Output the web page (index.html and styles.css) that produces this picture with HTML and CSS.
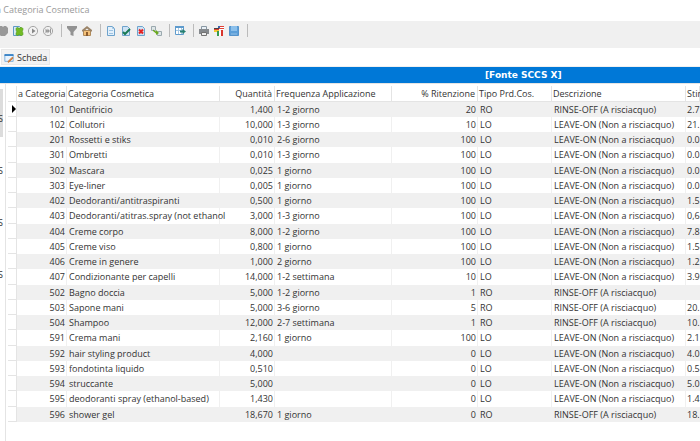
FILE: index.html
```
<!DOCTYPE html>
<html lang="it">
  <head>
    <meta charset="UTF-8" />
    <meta name="viewport" content="width=device-width, initial-scale=1.0" />
    <title>Categoria Cosmetica</title>
    <link rel="stylesheet" href="styles.css">
  </head>
  <body>
    <header class="title-bar">a Categoria Cosmetica</header>

    <div class="toolbar" role="toolbar">
      <button type="button" class="tool tool-cut" aria-label="Stop">
        <svg viewBox="0 0 12 12"><path d="M2 1h3l1 1 1-1h2l2 2v5l-3 3H4L1 9V3z" fill="#999" /></svg>
      </button>
      <button type="button" class="tool" aria-label="Aggiorna">
        <svg viewBox="0 0 12 12">
          <path d="M1.5 1.5h6l2 2v7h-8z" fill="#d7e8f6" stroke="#5e9ac4" />
          <path d="M4 4c0-2 3-2 3 0 0-2 4-2 4 0s-1 2-1 2 1 1 1 3-3 2-4 0c0 2-3 2-3 0s1-2 1-2-1-1-1-3z" fill="#73bb25" stroke="#4f9a17" stroke-width=".6" />
        </svg>
      </button>
      <button type="button" class="tool" aria-label="Successivo">
        <svg viewBox="0 0 12 12">
          <circle cx="6" cy="6" r="4.6" fill="#f2f2f2" stroke="#a6a6a6" />
          <path d="M5 3.5l3.5 2.5L5 8.5z" fill="#888" />
        </svg>
      </button>
      <button type="button" class="tool" aria-label="Ultimo">
        <svg viewBox="0 0 12 12">
          <circle cx="6" cy="6" r="4.6" fill="#f2f2f2" stroke="#a6a6a6" />
          <path d="M3.5 3.5L6 6 3.5 8.5zM5.5 3.5L8 6 5.5 8.5zM8 3.5h1v5H8z" fill="#999" />
        </svg>
      </button>
      <span class="separator"></span>
      <button type="button" class="tool" aria-label="Filtro">
        <svg viewBox="0 0 12 12"><path d="M1 1h10v2L7.5 7v4L4.500 10V7L1 3z" fill="#929292" /></svg>
      </button>
      <button type="button" class="tool" aria-label="Home">
        <svg viewBox="0 0 12 12">
          <path d="M2.500 5.500h7v5h-7z" fill="#f3c078" stroke="#b08a5a" />
          <path d="M1 6.500V5l5-4 5 4v1.500H9.500L6 3.500 2.500 6.500z" fill="#9b8468" />
          <path d="M5 7h2v4H5z" fill="#8d5b2b" />
        </svg>
      </button>
      <span class="separator"></span>
      <button type="button" class="tool" aria-label="Nuovo">
        <svg viewBox="0 0 12 12">
          <path d="M2.500 1.500h5l2 2v7h-7z" fill="#e3f0fb" stroke="#6ea3cc" />
          <path d="M7.500 1.500v2h2M4 5.500h4M4 8.500h4" fill="none" stroke="#9fc4e2" />
        </svg>
      </button>
      <button type="button" class="tool" aria-label="Conferma">
        <svg viewBox="0 0 12 12">
          <path d="M2.500 1.500h5l2 2v7h-7z" fill="#cfe3f5" stroke="#6ea3cc" />
          <path d="M3 7l2 2 5-5" fill="none" stroke="#197a53" stroke-width="2" />
        </svg>
      </button>
      <button type="button" class="tool" aria-label="Elimina">
        <svg viewBox="0 0 12 12">
          <path d="M2.500 1.500h5l2 2v7h-7z" fill="#cfe3f5" stroke="#6ea3cc" />
          <path d="M4 4.500l4 4M8 4.500l-4 4" stroke="#e52222" stroke-width="2" />
        </svg>
      </button>
      <button type="button" class="tool" aria-label="Duplica">
        <svg viewBox="0 0 12 12">
          <path d="M1.500 1.500h4v4h-4zM7.500 6.500h4v4h-4z" fill="#dfe6e9" stroke="#9aa9ae" />
          <path d="M3 4.500l3 2V5l3 3-3 2V8.500L3 6z" fill="#69a91e" />
        </svg>
      </button>
      <span class="separator"></span>
      <button type="button" class="tool" aria-label="Esporta">
        <svg viewBox="0 0 12 12">
          <path d="M1.500 1.500h8v8h-8z" fill="#fff" stroke="#5e9bcd" />
          <path d="M1 1h9v2H1z" fill="#5e9bcd" />
          <path d="M4.500 3v6M7.500 3v6M2 5.500h7" stroke="#a8c9e4" />
          <path d="M6 5.500h2.500V4L12 6.500 8.500 9V7.500H6z" fill="#278072" />
        </svg>
      </button>
      <span class="separator"></span>
      <button type="button" class="tool" aria-label="Stampa">
        <svg viewBox="0 0 12 12">
          <path d="M3.500 1.500h5v3h-5z" fill="#e9f0f6" stroke="#8897a3" />
          <path d="M1 4h10v5H1z" fill="#85898d" />
          <path d="M3.500 7.500h5v3h-5z" fill="#eee" stroke="#737373" />
        </svg>
      </button>
      <button type="button" class="tool" aria-label="Lingua">
        <svg viewBox="0 0 12 12">
          <path d="M5 1h6v1H5zM5 3h6v1H5z" fill="#e04136" />
          <path d="M5 2h6v1H5zM5 4h6v1H5z" fill="#fff" />
          <path d="M5 1h2v2H5z" fill="#3f62a8" />
          <path d="M1 3h5v1H1z" fill="#444" />
          <path d="M1 4h5v1H1z" fill="#df3c2a" />
          <path d="M1 5h5v2H1z" fill="#f5c731" />
          <path d="M4 6h2v5H4z" fill="#359a50" />
          <path d="M6 6h2v5H6z" fill="#fff" />
          <path d="M8 5h2v6H8z" fill="#d8352c" />
        </svg>
      </button>
      <button type="button" class="tool" aria-label="Salva">
        <svg viewBox="0 0 12 12">
          <path d="M1.500 1.500h9v9h-9z" fill="#5c9fd9" stroke="#5593cb" />
          <path d="M3 1h6v5H3z" fill="#8cc0eb" />
          <path d="M3 8h6v2H3z" fill="#77afdf" />
        </svg>
      </button>
      <span class="separator"></span>
    </div>

    <nav class="tabs">
      <button type="button" class="tab">
        <svg class="tab-icon" viewBox="0 0 12 12">
          <path d="M1 2h10v8H1z" fill="#e8f4ff" stroke="#6ca6d8" />
          <path d="M1 2h10v1H1z" fill="#347fc4" stroke="#347fc4" />
          <path d="M5 10l5-5 1 1-5 5H5z" fill="#e8873a" stroke="#c0702f" />
        </svg>
        Scheda
      </button>
    </nav>

    <div class="source">[Fonte SCCS X]</div>

    <main class="content">
      <aside class="side">
        <button type="button" class="side-item active">S</button>
        <button type="button" class="side-item">S</button>
        <button type="button" class="side-item">S</button>
        <button type="button" class="side-item">S</button>
      </aside>
      <div class="grid-panel">
        <table class="grid">
          <colgroup>
            <col class="col-mark">
            <col class="col-id">
            <col class="col-name">
            <col class="col-qty">
            <col class="col-freq">
            <col class="col-ret">
            <col class="col-type">
            <col class="col-desc">
            <col class="col-est">
          </colgroup>
          <thead>
            <tr><th></th><th class="num">a Categoria</th><th>Categoria Cosmetica</th><th class="num">Quantità</th><th>Frequenza Applicazione</th><th class="num">% Ritenzione</th><th>Tipo Prd.Cos.</th><th>Descrizione</th><th>Stima</th></tr>
          </thead>
          <tbody>
            <tr><td class="current"></td><td class="num">101</td><td>Dentifricio</td><td class="num">1,400</td><td>1-2 giorno</td><td class="num">20</td><td>RO</td><td>RINSE-OFF (A risciacquo)</td><td>2.7</td></tr>
            <tr><td></td><td class="num">102</td><td>Collutori</td><td class="num">10,000</td><td>1-3 giorno</td><td class="num">10</td><td>LO</td><td>LEAVE-ON (Non a risciacquo)</td><td>21.</td></tr>
            <tr><td></td><td class="num">201</td><td>Rossetti e stiks</td><td class="num">0,010</td><td>2-6 giorno</td><td class="num">100</td><td>LO</td><td>LEAVE-ON (Non a risciacquo)</td><td>0.0</td></tr>
            <tr><td></td><td class="num">301</td><td>Ombretti</td><td class="num">0,010</td><td>1-3 giorno</td><td class="num">100</td><td>LO</td><td>LEAVE-ON (Non a risciacquo)</td><td>0.0</td></tr>
            <tr><td></td><td class="num">302</td><td>Mascara</td><td class="num">0,025</td><td>1 giorno</td><td class="num">100</td><td>LO</td><td>LEAVE-ON (Non a risciacquo)</td><td>0.0</td></tr>
            <tr><td></td><td class="num">303</td><td>Eye-liner</td><td class="num">0,005</td><td>1 giorno</td><td class="num">100</td><td>LO</td><td>LEAVE-ON (Non a risciacquo)</td><td>0.0</td></tr>
            <tr><td></td><td class="num">402</td><td>Deodoranti/antitraspiranti</td><td class="num">0,500</td><td>1 giorno</td><td class="num">100</td><td>LO</td><td>LEAVE-ON (Non a risciacquo)</td><td>1.5</td></tr>
            <tr><td></td><td class="num">403</td><td>Deodoranti/atitras.spray (not ethanol</td><td class="num">3,000</td><td>1-3 giorno</td><td class="num">100</td><td>LO</td><td>LEAVE-ON (Non a risciacquo)</td><td>0,6</td></tr>
            <tr><td></td><td class="num">404</td><td>Creme corpo</td><td class="num">8,000</td><td>1-2 giorno</td><td class="num">100</td><td>LO</td><td>LEAVE-ON (Non a risciacquo)</td><td>7.8</td></tr>
            <tr><td></td><td class="num">405</td><td>Creme viso</td><td class="num">0,800</td><td>1 giorno</td><td class="num">100</td><td>LO</td><td>LEAVE-ON (Non a risciacquo)</td><td>1.5</td></tr>
            <tr><td></td><td class="num">406</td><td>Creme in genere</td><td class="num">1,000</td><td>2 giorno</td><td class="num">100</td><td>LO</td><td>LEAVE-ON (Non a risciacquo)</td><td>1.2</td></tr>
            <tr><td></td><td class="num">407</td><td>Condizionante per capelli</td><td class="num">14,000</td><td>1-2 settimana</td><td class="num">10</td><td>LO</td><td>LEAVE-ON (Non a risciacquo)</td><td>3.9</td></tr>
            <tr><td></td><td class="num">502</td><td>Bagno doccia</td><td class="num">5,000</td><td>1-2 giorno</td><td class="num">1</td><td>RO</td><td>RINSE-OFF (A risciacquo)</td><td></td></tr>
            <tr><td></td><td class="num">503</td><td>Sapone mani</td><td class="num">5,000</td><td>3-6 giorno</td><td class="num">5</td><td>RO</td><td>RINSE-OFF (A risciacquo)</td><td>20.</td></tr>
            <tr><td></td><td class="num">504</td><td>Shampoo</td><td class="num">12,000</td><td>2-7 settimana</td><td class="num">1</td><td>RO</td><td>RINSE-OFF (A risciacquo)</td><td>10.</td></tr>
            <tr><td></td><td class="num">591</td><td>Crema mani</td><td class="num">2,160</td><td>1 giorno</td><td class="num">100</td><td>LO</td><td>LEAVE-ON (Non a risciacquo)</td><td>2.1</td></tr>
            <tr><td></td><td class="num">592</td><td>hair styling product</td><td class="num">4,000</td><td></td><td class="num">0</td><td>LO</td><td>LEAVE-ON (Non a risciacquo)</td><td>4.0</td></tr>
            <tr><td></td><td class="num">593</td><td>fondotinta liquido</td><td class="num">0,510</td><td></td><td class="num">0</td><td>LO</td><td>LEAVE-ON (Non a risciacquo)</td><td>0.5</td></tr>
            <tr><td></td><td class="num">594</td><td>struccante</td><td class="num">5,000</td><td></td><td class="num">0</td><td>LO</td><td>LEAVE-ON (Non a risciacquo)</td><td>5.0</td></tr>
            <tr><td></td><td class="num">595</td><td>deodoranti spray (ethanol-based)</td><td class="num">1,430</td><td></td><td class="num">0</td><td>LO</td><td>LEAVE-ON (Non a risciacquo)</td><td>1.4</td></tr>
            <tr><td></td><td class="num">596</td><td>shower gel</td><td class="num">18,670</td><td>1 giorno</td><td class="num">0</td><td>RO</td><td>RINSE-OFF (A risciacquo)</td><td>18.</td></tr>
          </tbody>
        </table>
      </div>
    </main>
  </body>
</html>
```
FILE: styles.css
```
* {
  box-sizing: border-box;
}
body {
  margin: 0;
  min-height: 100vh;
  display: flex;
  flex-direction: column;
  overflow: hidden;
  background-color: #fff;
  color: #333;
  font-family: "Open Sans", "Noto Sans", sans-serif;
  font-size: 9px;
  line-height: 14px;
}
button {
  margin: 0;
  padding: 0;
  border: none;
  background: none;
  color: inherit;
  font: inherit;
}
.title-bar {
  height: 21px;
  padding-top: 3px;
  margin-left: -4px;
  color: #999;
  white-space: nowrap;
}
.toolbar {
  display: flex;
  align-items: center;
  gap: 3px;
  height: 27px;
  padding-bottom: 8px;
  background-color: #f0f0f0;
}
.tool {
  flex: none;
  width: 12px;
  height: 12px;
}
.tool svg {
  display: block;
  width: 12px;
  height: 12px;
}
.tool-cut {
  margin-left: -3px;
}
.separator {
  width: 1px;
  height: 13px;
  margin: 0 1px 0 4px;
  background-color: #bbb;
}
.tabs {
  display: flex;
  height: 19px;
  padding: 1px 1px 1px;
  border-bottom: 1px solid #f0f0f0;
}
.tab {
  display: flex;
  align-items: center;
  gap: 3px;
  padding: 1px 2px 0;
  border: 1px solid #e8e8e8;
  background-color: #f2f2f2;
}
.tab-icon {
  width: 10px;
  height: 10px;
}
.source {
  height: 16px;
  padding-left: 485px;
  background-color: #0078d7;
  color: #fff;
  font-family: "DejaVu Sans", sans-serif;
  font-weight: bold;
  line-height: 16px;
  white-space: nowrap;
}
.content {
  flex: 1;
  display: flex;
  border-top: 1px solid #e4e4e4;
}
.side {
  flex: none;
  width: 6px;
  padding-top: 5px;
  border-right: 1px solid #e4e4e4;
}
.side-item {
  display: flex;
  justify-content: flex-end;
  align-items: center;
  width: 3px;
  height: 48px;
  margin-bottom: 4px;
  padding-top: 12px;
}
.side-item.active {
  background-color: #dcdcdc;
}
.grid-panel {
  flex: 1;
  min-width: 0;
  padding: 2px 0 0 2px;
  overflow: hidden;
}
.grid {
  width: 100%;
  table-layout: fixed;
  border-collapse: separate;
  border-spacing: 0;
}
.col-mark { width: 9px; }
.col-id { width: 50px; }
.col-name { width: 153px; }
.col-qty { width: 55px; }
.col-freq { width: 117px; }
.col-ret { width: 86px; }
.col-type { width: 74px; }
.col-desc { width: 134px; }
.grid th {
  height: 16px;
  padding: 1px 2px 0 1px;
  border-right: 1px solid #e4e4e4;
  border-bottom: 1px solid #e4e4e4;
  font-weight: normal;
  line-height: 14px;
  text-align: left;
  white-space: nowrap;
}
.grid td {
  height: 15px;
  padding: 0 1px 0 2px;
  border-right: 1px solid #f0f0f0;
  white-space: nowrap;
}
.grid tr:nth-child(4n) td {
  height: 16px;
}
.grid tbody tr:nth-child(odd) {
  background-color: #f0f0f0;
}
.grid .num {
  text-align: right;
}
.grid td:first-child {
  padding: 0;
  background-color: #fff;
  border-right: 1px solid #e4e4e4;
  border-bottom: 1px solid #e4e4e4;
}
.grid td:last-child {
  padding: 0 0 0 1px;
  border-right: none;
}
.current::before {
  content: "";
  display: block;
  width: 4px;
  margin-left: 4px;
  border: 4px solid transparent;
  border-left-color: #000;
  border-right: none;
}
```
